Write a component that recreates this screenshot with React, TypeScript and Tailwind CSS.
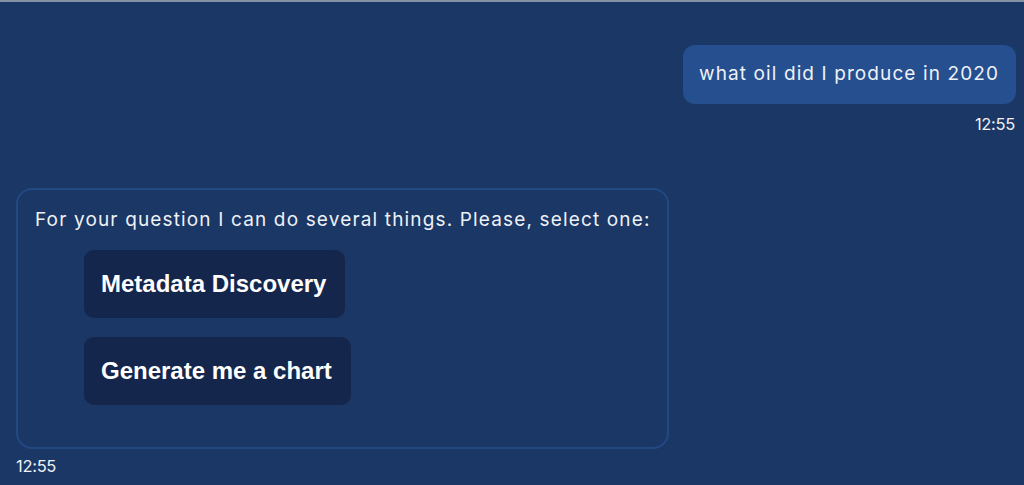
import { useState } from "react";

type Message = {
  from: "user" | "bot";
  text: string;
  time: string;
  options?: string[];
};

const messages: Message[] = [
  { from: "user", text: "what oil did I produce in 2020", time: "12:55" },
  {
    from: "bot",
    text: "For your question I can do several things. Please, select one:",
    time: "12:55",
    options: ["Metadata Discovery", "Generate me a chart"],
  },
];

export default function App() {
  const [picked, setPicked] = useState<string | null>(null);

  return (
    <div
      className="w-full h-[485px] overflow-hidden bg-[#1a3765] border-t-2 border-[#8490a6] text-[#eef1f6] px-4 pr-2"
      style={{ fontFamily: "Inter, 'Noto Sans', sans-serif" }}
    >
      {/* User message */}
      <div className="flex flex-col items-end mt-[43px]">
        <div className="bg-[#264f8f] rounded-[12px] h-[59px] flex items-center pl-4 pr-[17px] text-[19px] tracking-[1.1px]">
          {messages[0].text}
        </div>
        <span className="mt-[11px] text-[16.5px] leading-[18px] tracking-[-0.3px] pr-[1px]">
          {messages[0].time}
        </span>
      </div>

      {/* Bot message */}
      <div className="flex flex-col items-start mt-[55px]">
        <div className="w-[653px] h-[261px] border-2 border-[#234985] rounded-[16px] pl-[17px] pt-[18px]">
          <p className="text-[19px] leading-[24px] tracking-[1.15px]">{messages[1].text}</p>
          <div className="flex flex-col items-start gap-[19px] ml-[49px] mt-[18px]">
            {messages[1].options!.map((opt) => (
              <button
                key={opt}
                onClick={() => setPicked(opt)}
                className={`h-[68px] rounded-[10px] pl-[17px] pr-[19px] text-[24px] font-bold text-white ${
                  picked === opt ? "bg-[#0f1f3f]" : "bg-[#14264b]"
                }`}
                style={{ fontFamily: "'Liberation Sans', Arial, sans-serif" }}
              >
                {opt}
              </button>
            ))}
          </div>
        </div>
        <span className="mt-[8px] text-[16.5px] leading-[18px] tracking-[-0.3px]">
          {messages[1].time}
        </span>
      </div>
    </div>
  );
}
